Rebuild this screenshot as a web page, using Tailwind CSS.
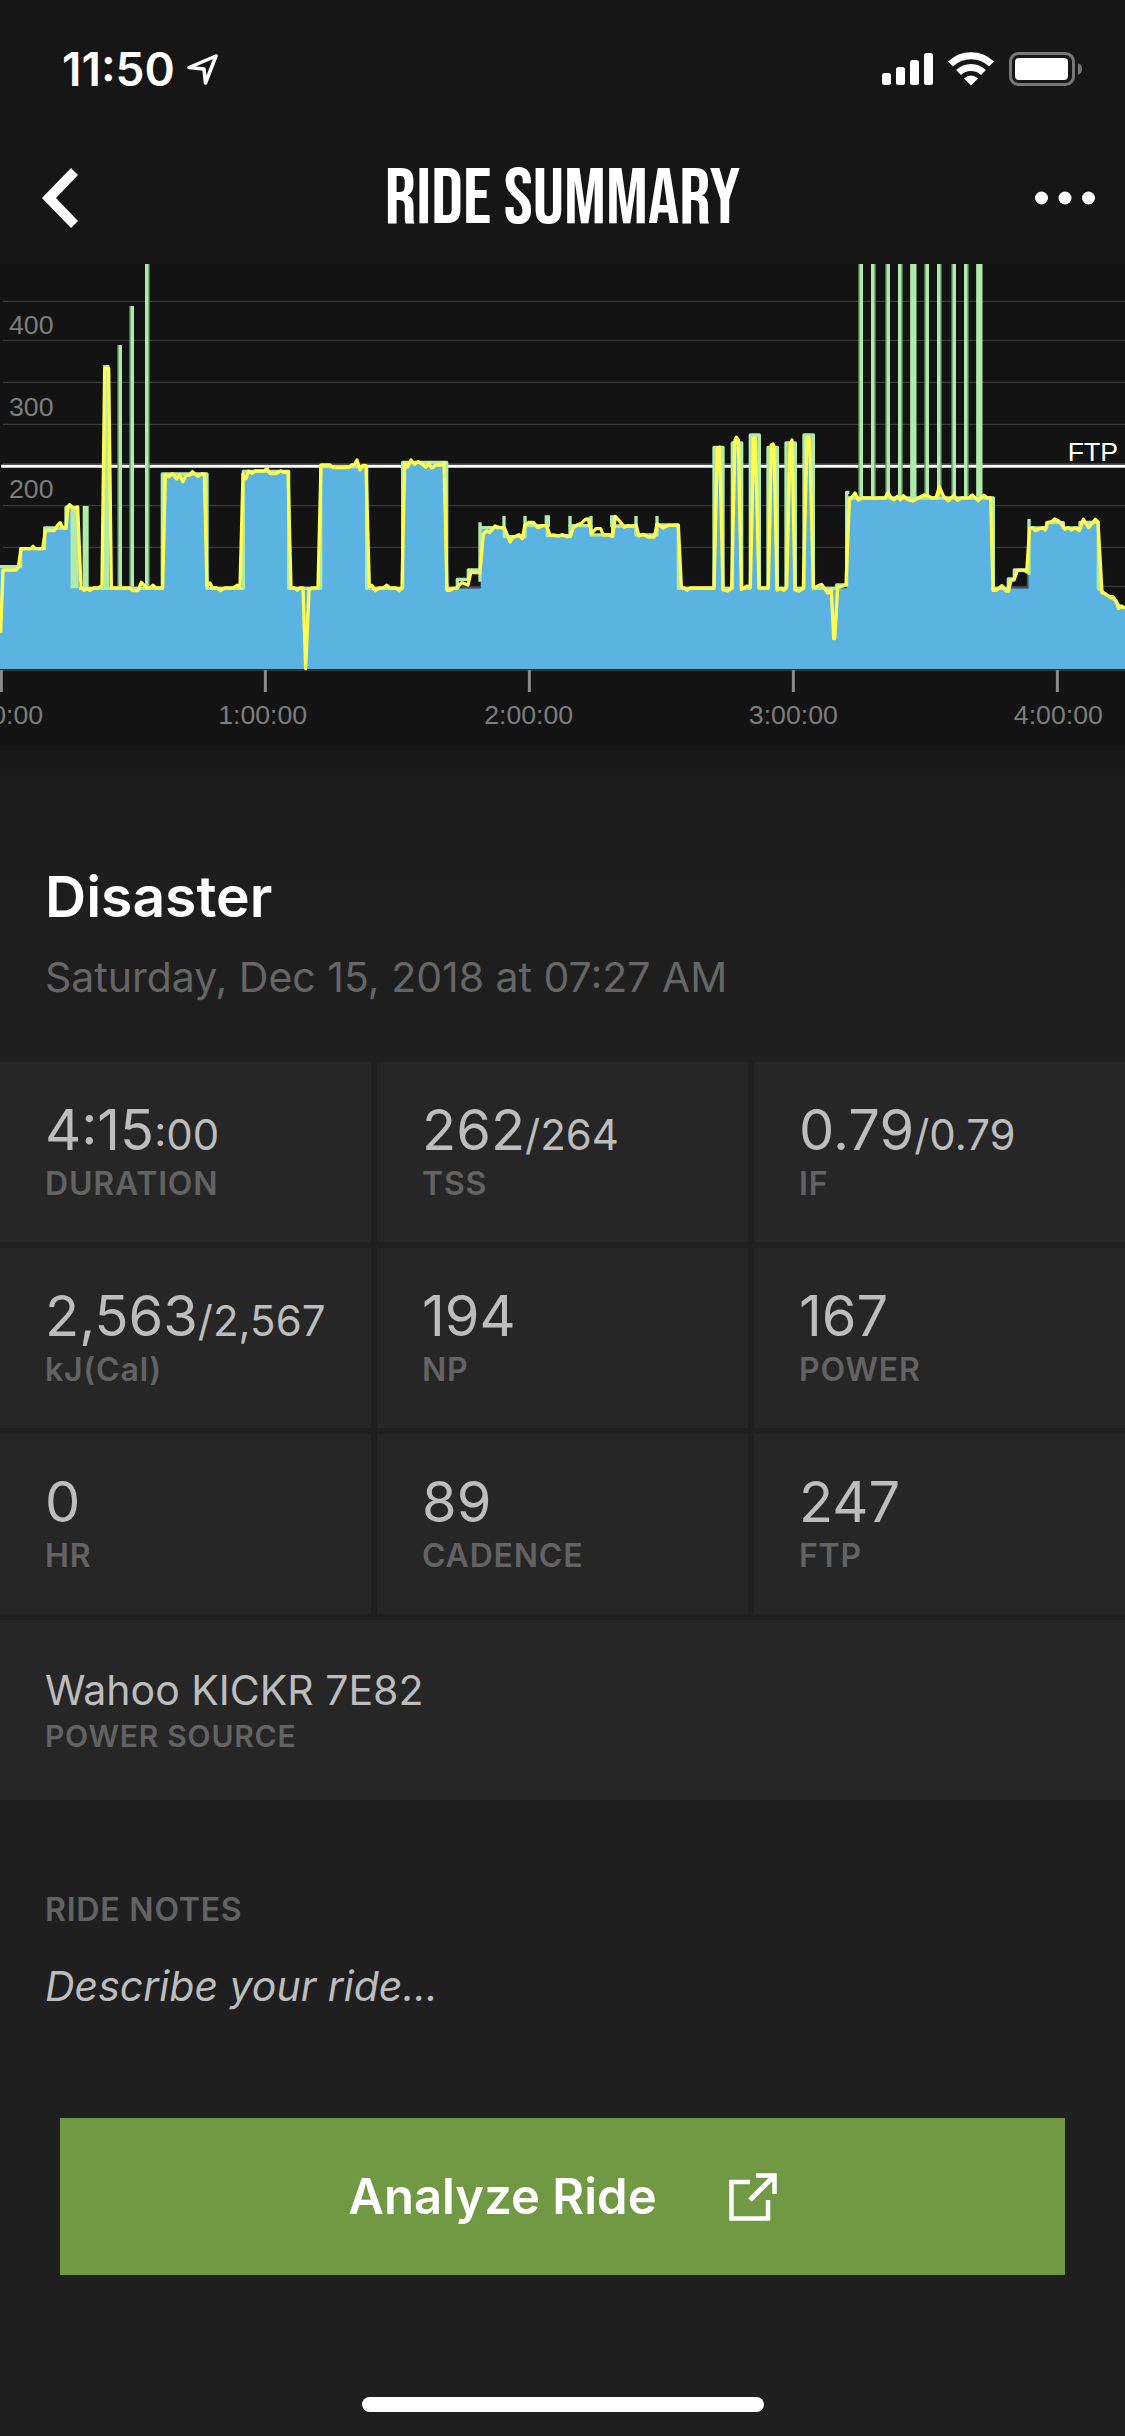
<!DOCTYPE html>
<html lang="en">
<head>
<meta charset="utf-8">
<meta name="viewport" content="width=device-width, initial-scale=1">
<title>Ride Summary</title>
<script src="https://cdn.jsdelivr.net/npm/@tailwindcss/browser@4"></script>
</head>
<body class="flex min-h-screen flex-col bg-[#1f1f1f] font-['Inter','Noto_Sans',sans-serif] text-[#bdbdbd]">

<!-- Status bar -->
<div class="flex h-[132px] items-center justify-between bg-[#161616] pr-[43px] pl-[62px] pt-[6px] text-white">
  <div class="flex items-center gap-3">
    <time class="text-[46px] leading-[56px] font-semibold">11:50</time>
    <svg class="h-[32px] w-[32px]" viewBox="0 0 32 32" fill="none" stroke="#fff" stroke-width="3.500" stroke-linejoin="round" aria-hidden="true"><path d="M29 3 L2 14.5 L17 16 L18.500 30 Z"/></svg>
  </div>
  <div class="flex items-center gap-[15px]">
    <svg class="h-[34px] w-[51px]" viewBox="0 0 51 34" fill="#fff" aria-hidden="true"><rect y="21" width="9" height="12" rx="2.500"/><rect x="14" y="15" width="9" height="18" rx="2.500"/><rect x="28" y="8" width="9" height="25" rx="2.500"/><rect x="42" y="1" width="9" height="32" rx="2.500"/></svg>
    <svg class="h-[34px] w-[46px]" viewBox="0 0 46 34" aria-hidden="true"><g fill="none" stroke="#fff" stroke-width="7"><path d="M2.500 12 A29.500 29.500 0 0 1 43.500 12"/><path d="M10.500 20.500 A18 18 0 0 1 35.500 20.500"/></g><path d="M16 26.500 Q23 20.500 30 26.500 L23 33.500Z" fill="#fff"/></svg>
    <svg class="h-[34px] w-[73px]" viewBox="0 0 73 34" aria-hidden="true"><rect x="1.500" y="1.500" width="63" height="31" rx="8" fill="none" stroke="#777" stroke-width="3"/><rect x="6" y="6" width="53" height="22" rx="4" fill="#fff"/><path d="M69 11 q4 2 4 6 t-4 6z" fill="#777"/></svg>
  </div>
</div>

<!-- Title bar -->
<header class="grid h-[132px] grid-cols-[1fr_auto_1fr] items-center bg-[#161616] px-[30px] text-white">
  <button type="button" aria-label="Back" class="justify-self-start pl-3"><svg class="h-[60px] w-[36px]" viewBox="0 0 36 60" fill="#fff"><path d="M0 30 L29 0 L36 7 L14 30 L36 53 L29 60Z"/></svg></button>
  <h1 class="pt-1 font-['Bebas_Neue','Liberation_Sans_Narrow','Roboto_Condensed','Liberation_Sans',sans-serif] text-[78px] leading-[80px] font-normal">RIDE SUMMARY</h1>
  <button type="button" aria-label="More options" class="justify-self-end"><svg class="h-[20px] w-[60px]" viewBox="0 0 60 20" fill="#fff"><circle cx="6.500" cy="10" r="6.500"/><circle cx="30" cy="10" r="6.500"/><circle cx="53.500" cy="10" r="6.500"/></svg></button>
</header>

<!-- Power chart -->
<svg class="block h-auto w-full bg-[#131313]" viewBox="0 12 3375 1446" role="img" aria-label="Power over time">
  <path d="M9 124H3375M9 241H3375M9 367H3375M9 493H3375M9 611H3375M9 737H3375M9 862H3375M9 979H3375" stroke="#444" stroke-width="3"/>
  <path d="M0 1231H3375" stroke="#444" stroke-width="3"/>
  <path d="M3 619H3375" stroke="#fff" stroke-width="9"/>
  <path d="M0 1227V925H60V868H132V806H200V742H235V985H490V645H620V985H728V635H866V985H962V622H1102V985H1208V609H1342V985H1442V806H1513V832H1575V797H1642V829H1710V797H1773V829H1838V798H1908V829H1971V795H2033V985H2142V562H2170V985H2197V549H2225V985H2250V527H2278V985H2304V562H2332V985H2358V549H2386V985H2412V527H2440V985H2540V714H2978V985H3084V805H3140V789H3190V805H3240V787H3297V985L3320 1005L3375 1048V1227Z" fill="#5ab3e1"/>
  <path d="M1385 982H1440M3032 982H3083V945" fill="none" stroke="#4a4d52" stroke-width="5"/>
  <g fill="none" stroke="#b0eba9" stroke-linejoin="round">
    <path stroke-width="10" d="M0 920H62V866H134V804H198V742H237M237 985H487V642H621V985H730V634H866V985H962V620H1100V985H1208V607H1340V985H1372V958H1405V930H1440M1440 803H1513V830H1575V797H1642V827H1710V797H1773V825H1838V798H1908V825H1971V795H2035V985H2142V562H2169V985H2197V549H2225V985H2251V525H2278V985H2304V562H2332V985H2358V549H2386V985H2412V525H2440V985H2510V975H2540V697H2548M2540 714H2980V985H3025V957H3043V930H3083M3085 804H3140V788H3190V804H3240V787H3295V985L3320 1005L3345 1020L3360 1042H3375"/>
    <path stroke-width="12" d="M360 255V980M396 138V980M441 12V980M2583 12V710M2619 12V710M2664 12V710M2700 12V710M2781 12V710M2817 12V710M2862 12V710M2898 12V710"/>
    <path stroke-width="4" stroke="#5f9566" d="M354 255V980M390 138V980M447 12V980M2577 12V710M2625 12V710M2658 12V710M2706 12V710M2775 12V710M2823 12V710M2856 12V710M2904 12V710"/>
    <path stroke-width="19" d="M319 315V985M2740 12V710M2938 12V710"/>
    <path stroke-width="25" d="M224 745V985"/>
    <path stroke-width="18" d="M257 738V985"/>
    <path stroke-width="10" d="M1440 787V965M1512 768V803M1575 768V800M1710 768V800M1773 768V800M1908 768V800M1971 768V800M3087 777V945"/>
    <path stroke-width="16" d="M1642 766V800M1838 766V800"/>
  </g>
  <path fill="none" stroke="#fffb50" stroke-width="10" stroke-linejoin="round" d="M2 1118L9 930H48L55 922L63 866H92L99 859L106 866H128L136 812H163L172 797L180 788L189 804H198L204 740L209 734L222 746L233 741L243 982L252 991L262 985L270 991L280 984H297L306 975L314 325H326L334 984H390L398 992H414L424 967L440 984L449 984L459 976L468 984H488L496 645L506 650L518 641L530 657L539 646L549 665L557 648L570 645L577 635L594 649L604 642H613L621 978L630 969L638 984H650L661 992L675 984H700L711 976L720 984L729 642L738 656L746 634L757 640L765 633H792L801 626L810 641H828L842 633L855 638L864 635L873 984H884L892 991L900 984H909L917 1226L927 990L936 984H954L963 615H990L1000 623H1046L1055 615L1063 614L1071 600L1080 630L1089 616L1098 617L1108 979L1116 976L1126 992L1138 984H1150L1160 976L1170 984H1188L1198 992L1206 984L1214 610L1223 621L1233 600L1243 613L1255 605L1268 614L1278 622L1286 611L1296 624L1308 615H1325L1332 608L1341 991H1350L1360 985H1370L1385 968L1404 975L1413 935L1421 938H1440L1450 822L1460 813L1469 818L1485 798L1498 803H1513L1524 830L1530 846L1540 832L1557 824L1567 836L1575 794L1586 787H1600L1613 803L1628 797H1640L1650 826L1660 825L1674 828L1688 824L1702 830H1711L1720 804L1732 794L1743 791L1756 778L1765 777L1775 820L1788 806H1802L1810 825L1823 824L1838 829L1846 769L1860 785L1874 802L1884 797L1897 799L1908 795L1917 828L1930 823L1945 831H1963L1971 792L1990 804L2005 796H2035L2044 981L2053 984L2061 991L2070 984H2142L2152 568L2159 562L2169 990L2182 993L2195 985L2205 540L2209 532L2215 540L2224 989L2240 978L2251 982L2261 534H2266L2277 984H2305L2314 555L2319 552L2322 560L2331 990L2344 985L2352 991L2360 980L2370 555L2376 540L2385 990L2396 993L2410 985L2421 534H2429L2440 984L2465 973L2483 999L2494 990L2501 1136H2504L2513 983L2538 975L2548 722L2565 699L2575 720L2585 714H2655L2664 698L2673 713L2682 720L2692 709L2701 719L2710 707L2722 718L2738 723L2755 714L2772 705L2782 706L2795 714H2808L2818 680L2830 708L2845 722L2862 706L2872 721L2885 714H2907L2917 705L2934 722L2952 706L2962 714H2972L2979 991H2988L3006 977L3018 993H3026L3033 960H3042L3052 931H3074L3080 936L3089 806L3098 804L3107 812L3118 806L3130 804L3135 810L3143 787L3155 785L3164 777L3177 784L3190 800L3195 808L3204 803L3214 810L3226 804L3238 812L3250 778L3266 803L3286 778L3294 786L3306 998L3318 1003L3328 1011L3338 1010L3348 1022L3356 1045L3364 1038L3375 1045"/>
  <path d="M4 1230V1296M796 1230V1296M1588 1230V1296M2380 1230V1296M3172 1230V1296" stroke="#8a8a8a" stroke-width="9"/>
  <g class="font-['Liberation_Sans',sans-serif]" font-size="80" fill="#7d7d7d">
    <text x="27" y="221">400</text><text x="27" y="467">300</text><text x="27" y="714">200</text>
    <g text-anchor="middle"><text x="-4" y="1392">0:00:00</text><text x="788" y="1392">1:00:00</text><text x="1586" y="1392">2:00:00</text><text x="2380" y="1392">3:00:00</text><text x="3175" y="1392">4:00:00</text></g>
    <text x="3354" y="602" text-anchor="end" fill="#fff">FTP</text>
  </g>
</svg>

<main class="flex grow flex-col">
  <section class="bg-linear-to-b from-[#171717] via-[#1d1d1d] via-20% to-[#1f1f1f] px-[45px] pt-[115px] pb-[57px]">
    <h2 class="text-[57px] leading-[72px] font-semibold text-white">Disaster</h2>
    <p class="mt-4 text-[41px] leading-[56px] text-[#666]">Saturday, Dec 15, 2018 at 07:27 AM</p>
  </section>

  <dl class="grid grid-cols-3 gap-[6px]">
    <div class="flex flex-col-reverse justify-end bg-[#262626] px-[45px] pt-9 pb-[38px]"><dt class="mt-[2px] text-[32px] leading-[40px] font-semibold tracking-wide text-[#636363]">DURATION</dt><dd class="text-[56px] leading-[64px] whitespace-nowrap">4:15<span class="text-[42px] leading-none">:00</span></dd></div>
    <div class="flex flex-col-reverse justify-end bg-[#262626] px-[45px] pt-9 pb-[38px]"><dt class="mt-[2px] text-[32px] leading-[40px] font-semibold tracking-wide text-[#636363]">TSS</dt><dd class="text-[56px] leading-[64px] whitespace-nowrap">262<span class="text-[42px] leading-none">/264</span></dd></div>
    <div class="flex flex-col-reverse justify-end bg-[#262626] px-[45px] pt-9 pb-[38px]"><dt class="mt-[2px] text-[32px] leading-[40px] font-semibold tracking-wide text-[#636363]">IF</dt><dd class="text-[56px] leading-[64px] whitespace-nowrap">0.79<span class="text-[42px] leading-none">/0.79</span></dd></div>
    <div class="flex flex-col-reverse justify-end bg-[#262626] px-[45px] pt-9 pb-[38px]"><dt class="mt-[2px] text-[32px] leading-[40px] font-semibold tracking-wide text-[#636363]">kJ(Cal)</dt><dd class="text-[56px] leading-[64px] whitespace-nowrap">2,563<span class="text-[42px] leading-none">/2,567</span></dd></div>
    <div class="flex flex-col-reverse justify-end bg-[#262626] px-[45px] pt-9 pb-[38px]"><dt class="mt-[2px] text-[32px] leading-[40px] font-semibold tracking-wide text-[#636363]">NP</dt><dd class="text-[56px] leading-[64px]">194</dd></div>
    <div class="flex flex-col-reverse justify-end bg-[#262626] px-[45px] pt-9 pb-[38px]"><dt class="mt-[2px] text-[32px] leading-[40px] font-semibold tracking-wide text-[#636363]">POWER</dt><dd class="text-[56px] leading-[64px]">167</dd></div>
    <div class="flex flex-col-reverse justify-end bg-[#262626] px-[45px] pt-9 pb-[38px]"><dt class="mt-[2px] text-[32px] leading-[40px] font-semibold tracking-wide text-[#636363]">HR</dt><dd class="text-[56px] leading-[64px]">0</dd></div>
    <div class="flex flex-col-reverse justify-end bg-[#262626] px-[45px] pt-9 pb-[38px]"><dt class="mt-[2px] text-[32px] leading-[40px] font-semibold tracking-wide text-[#636363]">CADENCE</dt><dd class="text-[56px] leading-[64px]">89</dd></div>
    <div class="flex flex-col-reverse justify-end bg-[#262626] px-[45px] pt-9 pb-[38px]"><dt class="mt-[2px] text-[32px] leading-[40px] font-semibold tracking-wide text-[#636363]">FTP</dt><dd class="text-[56px] leading-[64px]">247</dd></div>
    <div class="col-span-3 flex flex-col-reverse bg-[#262626] px-[45px] pt-11 pb-11"><dt class="text-[30px] leading-[40px] font-semibold tracking-wide text-[#636363]">POWER SOURCE</dt><dd class="text-[41px] leading-[52px]">Wahoo KICKR 7E82</dd></div>
  </dl>

  <section class="flex flex-col px-[45px] pt-[90px]">
    <label for="notes" class="text-[32px] leading-[40px] font-semibold tracking-wide text-[#636363]">RIDE NOTES</label>
    <textarea id="notes" rows="1" placeholder="Describe your ride..." class="mt-7 block w-full resize-none overflow-hidden bg-transparent text-[41px] leading-[56px] italic outline-none placeholder:text-[#bdbdbd]"></textarea>
  </section>

  <a href="#analyze" class="mx-[60px] mt-[104px] flex h-[157px] items-center justify-center gap-[72px] bg-[#719843] text-[49px] leading-[60px] font-semibold text-white">
    Analyze Ride
    <svg class="h-[48px] w-[48px]" viewBox="0 0 48 48" fill="none" stroke="#fff" stroke-width="4.500" aria-hidden="true"><path d="M21 9H2.500V45.500H39V27"/><path d="M27 2.500H45.500V21" /><path d="M45 3L21 27" stroke-width="5"/></svg>
  </a>
  <div class="mx-auto mt-auto mb-6 h-[15px] w-[402px] rounded-full bg-white"></div>
</main>
</body>
</html>
